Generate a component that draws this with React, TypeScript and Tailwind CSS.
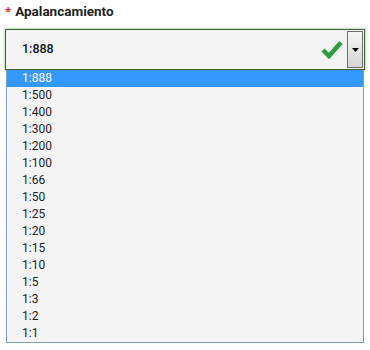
import React from "react";

const options = ["1:888", "1:500", "1:400", "1:300", "1:200", "1:100", "1:66", "1:50", "1:25", "1:20", "1:15", "1:10", "1:5", "1:3", "1:2", "1:1"];

export default function App() {
  const selected = "1:888";
  return (
    <div
      className="w-[370px] h-[350px] bg-white pl-[5px] pt-[2px] overflow-hidden"
      style={{ fontFamily: "Roboto, 'Liberation Sans', Arial, sans-serif" }}
    >
      <div className="h-[27px] text-[13.5px] font-bold text-[#222] leading-[18px]">
        <span className="text-[#d0312d] mr-[4px]">*</span>
        Apalancamiento
      </div>
      <div className="w-[360px] h-[41px] border border-[#3f5f3a] bg-[#f4f4f4] shadow-[0_0_3px_rgba(90,160,70,0.7)] flex items-center">
        <span className="pl-[16px] text-[12.5px] font-medium text-[#111] flex-1">{selected}</span>
        <svg width="22" height="19" viewBox="0 0 22 19" className="mr-[4px]">
          <path d="M2 10 L8 16 L20 2.5" fill="none" stroke="#2e9b3c" strokeWidth="4.5" strokeLinejoin="miter" />
        </svg>
        <div className="w-[16px] h-[37px] mr-[1px] border border-[#6c6c6c] bg-gradient-to-b from-[#f6f6f6] to-[#d6d6d6] flex items-center justify-center">
          <svg width="7" height="4" viewBox="0 0 7 4">
            <path d="M0 0 H7 L3.5 4 Z" fill="#000" />
          </svg>
        </div>
      </div>
      <div className="ml-[1px] w-[358px] border border-t-0 border-[#7f9db9] bg-[#f5f5f5]">
        {options.map((o) => (
          <div
            key={o}
            className={
              o === selected
                ? "h-[17px] pl-[15px] text-[12px] leading-[17px] bg-[#3399ff] text-white"
                : "h-[17px] pl-[15px] text-[12px] leading-[17px] text-[#222]"
            }
          >
            {o}
          </div>
        ))}
      </div>
    </div>
  );
}
